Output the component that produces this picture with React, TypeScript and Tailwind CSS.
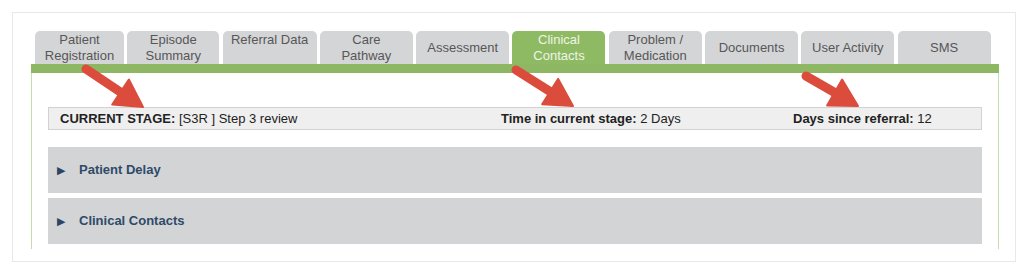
const tabs: { label: string[]; w: string; active?: boolean; top?: boolean }[] = [
  { label: ['Patient', 'Registration'], w: 'w-[89px]' },
  { label: ['Episode', 'Summary'], w: 'w-[92px]' },
  { label: ['Referral Data'], w: 'w-[94px]', top: true },
  { label: ['Care', 'Pathway'], w: 'w-[93px]' },
  { label: ['Assessment'], w: 'w-[93px]' },
  { label: ['Clinical', 'Contacts'], w: 'w-[93px]', active: true },
  { label: ['Problem /', 'Medication'], w: 'w-[93px]' },
  { label: ['Documents'], w: 'w-[93px]' },
  { label: ['User Activity'], w: 'w-[93px]' },
  { label: ['SMS'], w: 'w-[93px]' },
];

// red callout arrow, drawn from tail to tip
function Arrow({ x1, y1, x2, y2 }: { x1: number; y1: number; x2: number; y2: number }) {
  const dx = x2 - x1;
  const dy = y2 - y1;
  const len = Math.hypot(dx, dy);
  const ux = dx / len;
  const uy = dy / len;
  const headLen = 27;
  const headW = 15;
  const bx = x2 - ux * headLen;
  const by = y2 - uy * headLen;
  const px = -uy;
  const py = ux;
  return (
    <g>
      <line x1={x1} y1={y1} x2={bx + ux * 2} y2={by + uy * 2} stroke="#dc4c3c" strokeWidth={9} strokeLinecap="round" />
      <polygon
        points={`${x2},${y2} ${bx + px * headW},${by + py * headW} ${bx - px * headW},${by - py * headW}`}
        fill="#dc4c3c"
        stroke="#dc4c3c"
        strokeWidth={2}
        strokeLinejoin="round"
      />
    </g>
  );
}

function Accordion({ title }: { title: string }) {
  return (
    <div className="flex h-[46px] items-center bg-[#d3d4d6] pl-[9px]">
      <span className="text-[11px] leading-none text-[#2b4565]">▶</span>
      <span className="ml-[14px] text-[13px] font-bold text-[#2e4a69]">{title}</span>
    </div>
  );
}

export default function App() {
  return (
    <div className="relative h-[279px] w-[1024px] bg-white p-3 font-['Liberation_Sans',Arial,sans-serif]">
      <div className="h-[250px] w-[1004px] overflow-hidden border border-[#e8e8e8] bg-white pl-[18px] pt-[18px]">
        {/* Tabs */}
        <div className="flex gap-[3.3px] pl-[4px]">
          {tabs.map((t) => (
            <div
              key={t.label.join(' ')}
              className={`flex h-[33px] ${t.w} flex-col ${t.top ? 'justify-start pt-[1px]' : 'justify-center'} items-center rounded-t-[5px] text-center text-[13px] leading-[16px] ${
                t.active ? 'bg-[#8fba64] text-[#eef4e6]' : 'bg-[#d4d5d7] text-[#575757]'
              }`}
            >
              {t.label.map((l) => (
                <span key={l}>{l}</span>
              ))}
            </div>
          ))}
        </div>

        {/* Panel */}
        <div className="w-[968px]">
          <div className="h-[9px] bg-[#8db762]" />
          <div className="h-[176px] border-x border-[#c9dcaf] px-[16px] pt-[34px]">
            {/* Stage bar */}
            <div className="flex h-[23px] items-center border border-[#d2d2d2] bg-[#efefef] text-[13px] text-[#222]">
              <div className="w-[452px] pl-[11px]">
                <span className="font-bold">CURRENT STAGE:</span> [S3R ] Step 3 review
              </div>
              <div className="w-[292px]">
                <span className="font-bold">Time in current stage:</span> 2 Days
              </div>
              <div>
                <span className="font-bold">Days since referral:</span> 12
              </div>
            </div>

            <div className="mt-[17px] flex flex-col gap-[5px]">
              <Accordion title="Patient Delay" />
              <Accordion title="Clinical Contacts" />
            </div>
          </div>
        </div>
      </div>

      {/* Callout arrows */}
      <svg className="pointer-events-none absolute left-0 top-0" width={1024} height={279}>
        <Arrow x1={86} y1={69} x2={143} y2={107} />
        <Arrow x1={516} y1={70} x2={573} y2={106} />
        <Arrow x1={806} y1={76} x2={858} y2={106} />
      </svg>
    </div>
  );
}
